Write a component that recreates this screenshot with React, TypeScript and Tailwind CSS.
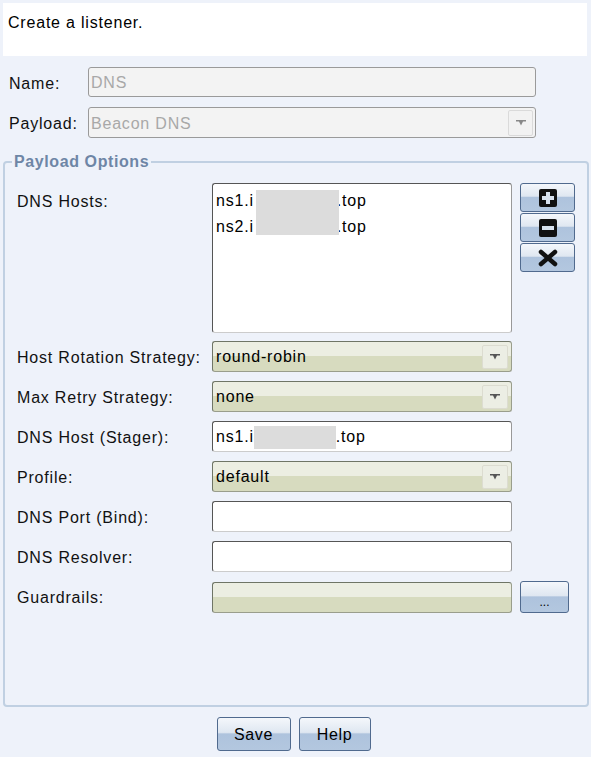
import React from 'react';

const font = { fontFamily: '"Liberation Sans", Arial, sans-serif' };

const Arrow = () => (
  <div className="flex h-[24px] w-[26px] items-center justify-center rounded-[2px] border border-[#dcdcd0] bg-[#eceee4]">
    <svg width="10" height="6" viewBox="0 0 10 6">
      <path d="M0 0h10v1.5H7L5 5.5 3 1.5H0z" fill="#555" />
    </svg>
  </div>
);

const Combo = ({ value }: { value: string }) => (
  <div className="relative flex h-[31px] w-[300px] items-center rounded-[3px] border border-[#6f7566] border-b-[#9a9e8c] border-r-[#9a9e8c] bg-[linear-gradient(#eceee2_0%,#eceee2_48%,#d7dbbf_48%,#d7dbbf_100%)] pl-[3px] pr-[3px]">
    <span className="flex-1 pt-[1px] text-[16px] tracking-[0.8px] text-black">{value}</span>
    <Arrow />
  </div>
);

const Field = ({ children }: { children?: React.ReactNode }) => (
  <div className="relative flex h-[31px] w-[300px] items-center rounded-[3px] border border-[#555] border-b-[#ccc] border-r-[#999] bg-white pl-[3px] pt-[1px] text-[16px] tracking-[0.8px] text-black">
    {children}
  </div>
);

const Row = ({ label, children }: { label: string; children: React.ReactNode }) => (
  <div className="flex items-center">
    <span className="w-[195px] pt-[2px] text-[16px] tracking-[0.8px] text-[#111]">{label}</span>
    {children}
  </div>
);

const Btn = ({ children, className = '' }: { children: React.ReactNode; className?: string }) => (
  <button
    className={`flex items-center justify-center rounded-[3px] border border-[#506a8e] bg-[linear-gradient(#f4f7fb_0%,#dfe7f1_45%,#aec3dd_50%,#b3c7df_100%)] ${className}`}
  >
    {children}
  </button>
);

export default function App() {
  return (
    <div style={font} className="flex h-[757px] w-[591px] flex-col bg-[#eef2fa] px-[3px] pt-[3px]">
      <div className="h-[53px] w-[584px] bg-white px-[5px] pt-[8px] text-[16px] tracking-[0.8px] text-black">Create a listener.</div>

      <div className="mt-[11px] flex flex-col gap-[10px] pl-[6px]">
        <div className="flex items-center">
          <span className="w-[79px] pt-[3px] text-[16px] tracking-[0.8px] text-[#111]">Name:</span>
          <div className="flex h-[30px] w-[448px] items-center rounded-[3px] border border-[#9a9a9a] bg-[#f3f3f3] pl-[2px] pt-[2px] text-[16px] tracking-[0.8px] text-[#a8a8a8]">
            DNS
          </div>
        </div>
        <div className="flex items-center">
          <span className="w-[79px] pt-[2px] text-[16px] tracking-[0.8px] text-[#111]">Payload:</span>
          <div className="flex h-[31px] w-[448px] items-center rounded-[3px] border border-[#9a9a9a] bg-[#f3f3f3] pl-[2px] pr-[2px]">
            <span className="flex-1 pt-[2px] text-[16px] tracking-[0.8px] text-[#a8a8a8]">Beacon DNS</span>
            <div className="flex h-[26px] w-[25px] items-center justify-center rounded-[2px] border border-[#dadada] bg-[#f2f2f2]">
              <svg width="10" height="6" viewBox="0 0 10 6">
                <path d="M0 0h10v1.5H7L5 5.5 3 1.5H0z" fill="#888" />
              </svg>
            </div>
          </div>
        </div>
      </div>

      <fieldset className="mt-[12px] flex h-[557px] w-[585px] flex-col rounded-[4px] border-2 border-[#c0d0e2] px-[12px] pb-0 pt-[9px]">
        <legend className="ml-[-5px] px-[2px] text-[16px] font-bold tracking-[0.6px] text-[#6e86a6]">Payload Options</legend>

        <div className="flex items-start">
          <span className="mt-[7px] w-[195px] text-[16px] tracking-[0.8px] text-[#111]">DNS Hosts:</span>
          <div className="relative h-[150px] w-[300px] rounded-[3px] border border-[#555] border-b-[#ccc] border-r-[#999] bg-white px-[3px] pt-[4px] text-[16px] leading-[26px] tracking-[0.8px] text-black">
            <div>ns1.i<span className="inline-block w-[83px]" />.top</div>
            <div>ns2.i<span className="inline-block w-[83px]" />.top</div>
            <div className="absolute left-[43px] top-[6px] h-[45px] w-[83px] bg-[#dcdcdc]" />
          </div>
          <div className="ml-[8px] flex flex-col gap-[1px]">
            <Btn className="h-[29px] w-[55px]">
              <svg width="18" height="18" viewBox="0 0 18 18">
                <rect width="18" height="18" rx="2" fill="#111" />
                <path d="M7 3h4v4h4v4h-4v4H7v-4H3V7h4z" fill="#d8e2ee" />
              </svg>
            </Btn>
            <Btn className="h-[29px] w-[55px]">
              <svg width="18" height="18" viewBox="0 0 18 18">
                <rect width="18" height="18" rx="2" fill="#111" />
                <rect x="3" y="7" width="12" height="4" fill="#d8e2ee" />
              </svg>
            </Btn>
            <Btn className="h-[29px] w-[55px]">
              <svg width="20" height="18" viewBox="0 0 20 18">
                <path d="M3 3l14 12M17 3L3 15" stroke="#111" strokeWidth="4.5" strokeLinecap="round" />
              </svg>
            </Btn>
          </div>
        </div>

        <div className="mt-[8px] flex flex-col gap-[9px]">
          <Row label="Host Rotation Strategy:">
            <Combo value="round-robin" />
          </Row>
          <Row label="Max Retry Strategy:">
            <Combo value="none" />
          </Row>
          <Row label="DNS Host (Stager):">
            <Field>
              ns1.i<span className="inline-block h-[23px] w-[82px] bg-[#dcdcdc]" />.top
            </Field>
          </Row>
          <Row label="Profile:">
            <Combo value="default" />
          </Row>
          <Row label="DNS Port (Bind):">
            <Field />
          </Row>
          <Row label="DNS Resolver:">
            <Field />
          </Row>
          <Row label="Guardrails:">
            <div className="h-[31px] w-[300px] rounded-[3px] border border-[#6f7566] border-b-[#9a9e8c] border-r-[#9a9e8c] bg-[linear-gradient(#eceee2_0%,#eceee2_48%,#d7dbbf_48%,#d7dbbf_100%)]" />
            <Btn className="ml-[8px] h-[32px] w-[49px] pt-[10px] text-[12px] leading-none text-black">...</Btn>
          </Row>
        </div>
      </fieldset>

      <div className="mt-[10px] flex justify-center gap-[8px] pr-[4px]">
        <Btn className="h-[34px] w-[74px] pt-[2px] text-[16px] tracking-[0.6px] text-black">Save</Btn>
        <Btn className="h-[34px] w-[72px] pt-[2px] text-[16px] tracking-[0.6px] text-black">Help</Btn>
      </div>
    </div>
  );
}
